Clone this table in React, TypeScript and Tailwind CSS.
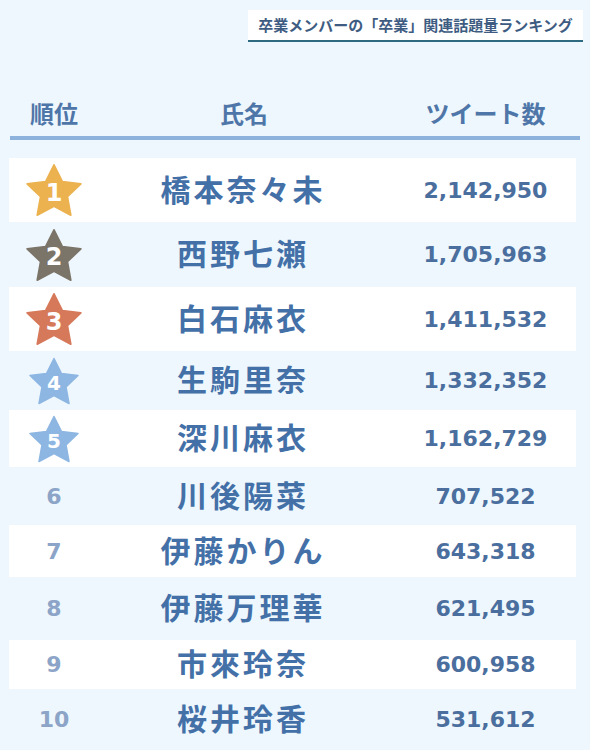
const rows = [
  { rank: 1, name: '橋本奈々未', count: '2,142,950', h: 'h-[64px]', bg: 'bg-white', star: '#ebb24f', big: true },
  { rank: 2, name: '西野七瀬', count: '1,705,963', h: 'h-[65px]', bg: '', star: '#7b7468', big: true },
  { rank: 3, name: '白石麻衣', count: '1,411,532', h: 'h-[64px]', bg: 'bg-white', star: '#d6795a', big: true },
  { rank: 4, name: '生駒里奈', count: '1,332,352', h: 'h-[59px]', bg: '', star: '#8db6e2', big: false },
  { rank: 5, name: '深川麻衣', count: '1,162,729', h: 'h-[57px]', bg: 'bg-white', star: '#8db6e2', big: false },
  { rank: 6, name: '川後陽菜', count: '707,522', h: 'h-[58px]', bg: '', star: '', big: false },
  { rank: 7, name: '伊藤かりん', count: '643,318', h: 'h-[52px]', bg: 'bg-white', star: '', big: false },
  { rank: 8, name: '伊藤万理華', count: '621,495', h: 'h-[63px]', bg: '', star: '', big: false },
  { rank: 9, name: '市來玲奈', count: '600,958', h: 'h-[49px]', bg: 'bg-white', star: '', big: false },
  { rank: 10, name: '桜井玲香', count: '531,612', h: 'h-[61px]', bg: '', star: '', big: false },
];

const jp = '[font-family:"Noto_Sans_CJK_JP",sans-serif]';
const num = '[font-family:"DejaVu_Sans",sans-serif]';

// fat five-point star, inner radius ~0.5 of outer
function Star({ color, n, big }: { color: string; n: number; big: boolean }) {
  const size = big ? 'w-[56px] h-[54px]' : 'w-[50px] h-[48px]';
  return (
    <div className={`relative ${size} flex items-center justify-center`}>
      <svg viewBox="0 0 100 96" className="absolute inset-0 w-full h-full">
        <polygon
          fill={color}
          strokeLinejoin="round"
          stroke={color}
          strokeWidth="3"
          points="50,3 65,33 98,37 74,60 80,93 50,77 20,93 26,60 2,37 35,33"
        />
      </svg>
      <span className={`relative ${num} font-bold text-white mt-[5px] ${big ? 'text-[24px]' : 'text-[20px]'}`}>
        {n}
      </span>
    </div>
  );
}

export default function App() {
  return (
    <div className={`w-[590px] h-[750px] bg-[#eef7fd] overflow-hidden ${jp}`}>
      <div className="flex justify-end pr-[7px] pt-[10px]">
        <div className="w-[335px] h-[32px] bg-white border-b-2 border-[#2e6a80] flex items-center justify-center text-[15px] font-bold text-[#3e5c82]">
          卒業メンバーの「卒業」関連話題量ランキング
        </div>
      </div>

      <div className="flex mt-[56px] ml-[9px] w-[567px] h-[30px] items-center text-[24px] font-bold text-[#4f76a8] leading-none">
        <div className="w-[90px] text-center">順位</div>
        <div className="w-[288px] pl-[2px] text-center">氏名</div>
        <div className="flex-1 pl-[8px] text-center">ツイート数</div>
      </div>
      <div className="mx-[10px] mt-[8px] h-[4px] bg-[#8db3dc]" />

      <div className="mt-[18px]">
        {rows.map((r) => (
          <div key={r.rank} className={`flex items-center w-[567px] ml-[9px] ${r.h} ${r.bg}`}>
            <div className="w-[90px] flex justify-center">
              {r.star ? (
                <Star color={r.star} n={r.rank} big={r.big} />
              ) : (
                <span className={`${num} font-bold text-[22px] text-[#8ba4c7]`}>{r.rank}</span>
              )}
            </div>
            <div className="w-[288px] text-center text-[30px] font-bold text-[#4470a8] tracking-[3px] leading-none -mt-[5px]">
              {r.name}
            </div>
            <div className={`flex-1 pl-[8px] text-center ${num} font-bold text-[22px] text-[#4a6e9e]`}>
              {r.count}
            </div>
          </div>
        ))}
      </div>
    </div>
  );
}
